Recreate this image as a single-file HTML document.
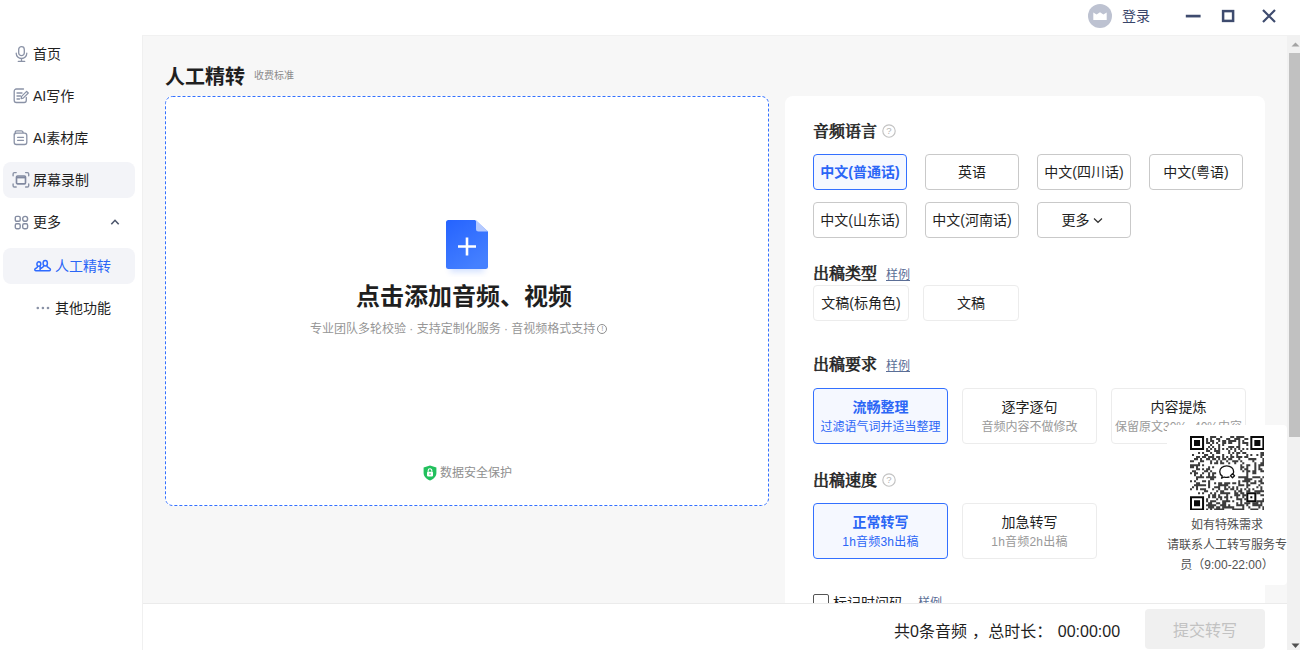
<!DOCTYPE html>
<html lang="zh-CN">
<head>
<meta charset="utf-8">
<title>人工精转</title>
<style>
*{box-sizing:border-box;margin:0;padding:0}
html,body{width:1300px;height:650px;overflow:hidden;background:#fff}
body{position:relative;font-family:"Liberation Sans","Noto Sans CJK SC",sans-serif;color:#1f1f1f;font-size:14px}
.abs{position:absolute}
.serif{font-family:"Liberation Serif","Noto Serif CJK SC",serif;font-weight:500;-webkit-text-stroke:0.550px #1f1f1f}
#topbar{left:0;top:0;width:1300px;height:35px;background:#fff;z-index:5}
#sidebar{left:0;top:34px;width:142px;height:616px;background:#fff}
#main{left:142px;top:34px;width:1145px;height:616px;background:#f7f7f7;overflow:hidden}
.nav{position:absolute;left:3px;width:132px;height:36px;border-radius:8px;line-height:37px;font-size:14px;color:#1f1f1f;white-space:nowrap}
.nav.hl{background:#f3f4f8}
.nav .t{position:absolute;left:30px;top:0}
.nav svg{position:absolute}
.btn{position:absolute;height:36px;border:1px solid #c9c9c9;border-radius:4px;background:#fff;text-align:center;line-height:34px;font-size:14px;color:#1f1f1f;white-space:nowrap}
.btn.sel{border-color:#3370ff;background:#f5f8ff;color:#2b66f6;font-weight:700}
.btn.lt{border-color:#ececec}
.card{position:absolute;width:135px;height:56px;border:1px solid #ececec;border-radius:4px;background:#fff;text-align:center;white-space:nowrap}
.card .a{position:absolute;left:0;right:0;top:9px;line-height:18px;font-size:14px;color:#1f1f1f}
.card .b{position:absolute;left:0;right:0;top:30px;line-height:16px;font-size:12px;color:#9a9a9a}
.card.sel{border-color:#3370ff;background:#f5f8ff}
.card.sel .a{color:#2b66f6;font-weight:700}
.card.sel .b{color:#2b66f6}
.h{position:absolute;font-size:16px;line-height:22px;color:#1f1f1f;white-space:nowrap}
.lnk{position:absolute;font-size:12px;line-height:16px;color:#5b6e96;text-decoration:underline;white-space:nowrap}
</style>
</head>
<body>
<div id="topbar" class="abs">
<div class="abs" style="left:1088px;top:4px;width:24px;height:24px;border-radius:12px;background:#bdc2d1"></div>
<svg class="abs" style="left:1088px;top:4px" width="24" height="24" viewBox="0 0 24 24"><path d="M5.3 8.4 L8.6 10.6 L12 8.2 L15.4 10.6 L18.7 8.4 L18.7 15.9 L5.3 15.9 Z" fill="#fff"/></svg>
<div class="abs" style="left:1122px;top:6px;font-size:14px;line-height:20px;color:#38446a;white-space:nowrap">登录</div>
<svg class="abs" style="left:1180px;top:4px" width="100" height="24" viewBox="0 0 100 24"><g stroke="#3e4b6e" fill="none"><path d="M5.800 12.100 H20.600" stroke-width="2.700"/><rect x="43.100" y="7.100" width="10" height="9.800" stroke-width="2.500"/></g></svg>
<svg class="abs" style="left:1261px;top:8px" width="16" height="16" viewBox="0 0 16 16"><path d="M2 2 L14 14 M14 2 L2 14" stroke="#3e4b6e" stroke-width="2.2" fill="none"/></svg>
</div>
<div id="sidebar" class="abs">
<div class="nav" style="top:2px"><svg style="left:10.600px;top:8.500px" width="16" height="18" viewBox="0 0 16 18"><rect x="4.7" y="1.7" width="5.6" height="9" rx="2.8" fill="none" stroke="#8a92a6" stroke-width="1.3"/><path d="M2.2 8.2 A5.3 5.3 0 0 0 12.8 8.2 M7.5 13.6 V16.3 M4.3 16.4 H10.7" fill="none" stroke="#8a92a6" stroke-width="1.3" stroke-linecap="round"/></svg><span class="t">首页</span></div>
<div class="nav" style="top:44px"><svg style="left:9px;top:9px" width="18" height="18" viewBox="0 0 18 18"><path d="M14.3 10.5 V13.3 A2.2 2.2 0 0 1 12.1 15.5 H4.4 A2.2 2.2 0 0 1 2.2 13.3 V4.2 A2.2 2.2 0 0 1 4.4 2 H11.5" fill="none" stroke="#8a92a6" stroke-width="1.3" stroke-linecap="round"/><path d="M5 6 H10 M5 9 H8.5 M5 12 H7.5" stroke="#8a92a6" stroke-width="1.3" stroke-linecap="round"/><path d="M14.6 4.3 L16.3 6 L11.2 11.1 L9.1 11.6 L9.6 9.4 Z" fill="none" stroke="#8a92a6" stroke-width="1.2" stroke-linejoin="round"/></svg><span class="t">AI写作</span></div>
<div class="nav" style="top:86px"><svg style="left:9px;top:9px" width="18" height="18" viewBox="0 0 18 18"><path d="M2.2 5 V13.2 A2.3 2.3 0 0 0 4.5 15.5 H12.5 A2.3 2.3 0 0 0 14.8 13.2 V6.4 A2.3 2.3 0 0 0 12.500 4.1 H4.5 A2.3 2.3 0 0 0 2.2 6.400 M3.2 4.500 V3.3 A1.4 1.4 0 0 1 4.6 1.9 H9.3 A1.8 1.8 0 0 1 11.1 3.700" fill="none" stroke="#8a92a6" stroke-width="1.3" stroke-linecap="round"/><path d="M5.600 8.300 H11.500 M5.600 11.300 H11.500" stroke="#8a92a6" stroke-width="1.3" stroke-linecap="round"/></svg><span class="t">AI素材库</span></div>
<div class="nav hl" style="top:128px"><svg style="left:9px;top:9px" width="18" height="18" viewBox="0 0 18 18"><path d="M1.100 4.700 V2.900 A1.300 1.300 0 0 1 2.400 1.600 H4.200 M13.600 1.600 H15.400 A1.300 1.300 0 0 1 16.700 2.900 V4.700 M16.700 12.900 V14.700 A1.300 1.300 0 0 1 15.400 16 H13.600 M4.200 16 H2.400 A1.300 1.300 0 0 1 1.100 14.700 V12.900" fill="none" stroke="#8a92a6" stroke-width="1.400" stroke-linecap="round"/><rect x="4.500" y="5" width="9" height="7.800" rx="1.100" fill="#f7f8fa" stroke="#8189a0" stroke-width="1.650"/><path d="M4.500 6.500 H13.500" stroke="#8189a0" stroke-width="1.800"/></svg><span class="t">屏幕录制</span></div>
<div class="nav" style="top:170px"><svg style="left:10.500px;top:11px" width="16" height="16" viewBox="0 0 16 16"><g fill="none" stroke="#858da2" stroke-width="1.400"><rect x="1.300" y="1.400" width="4.900" height="4.900" rx="1.400"/><rect x="8.700" y="1.400" width="4.900" height="4.900" rx="2.400"/><rect x="1.300" y="8.800" width="4.900" height="4.900" rx="1.400"/><rect x="8.700" y="8.800" width="4.900" height="4.900" rx="1.400"/></g></svg><span class="t">更多</span><svg style="left:107px;top:14px" width="10" height="8" viewBox="0 0 10 8"><path d="M1.300 6.200 L5 2.300 L8.700 6.200" fill="none" stroke="#4c566c" stroke-width="1.600"/></svg></div>
<div class="nav hl" style="top:214px;color:#2b66f6"><svg style="left:31px;top:11px" width="18" height="14" viewBox="0 0 18 14"><g fill="none" stroke="#2f6bff" stroke-width="1.500" stroke-linejoin="round" stroke-linecap="round"><ellipse cx="11.250" cy="4.200" rx="2.150" ry="2.700"/><ellipse cx="4.850" cy="5.050" rx="1.950" ry="2.250"/><path d="M9.700 6.500 C9.700 8.100 8.300 8.500 6.600 9.500 M12.800 6.500 C12.800 8.100 14.400 8.600 15.500 9.300 C16.300 9.800 16.500 10.500 16.300 11 C16.100 11.500 15.800 11.700 15.300 11.700 L1.800 11.700 C1.100 11.700 0.700 11.200 0.800 10.600 C0.900 10 1.300 9.600 2 9.300 C3 8.800 3.600 8.400 3.600 7.200 M6.100 7.200 L6.100 11.700"/></g></svg><span class="t" style="left:52px">人工精转</span></div>
<div class="nav" style="top:256px"><svg style="left:33px;top:16px" width="14" height="4" viewBox="0 0 14 4"><circle cx="1.800" cy="2" r="1.300" fill="#8a92a6"/><circle cx="6.900" cy="2" r="1.300" fill="#8a92a6"/><circle cx="12" cy="2" r="1.300" fill="#8a92a6"/></svg><span class="t" style="left:52px">其他功能</span></div>
</div>
<div id="main" class="abs">
<div class="abs" style="left:23px;top:29px;font-size:20px;line-height:28px;font-weight:700;color:#1f1f1f;white-space:nowrap">人工精转</div>
<div class="abs" style="left:112px;top:35px;font-size:10px;line-height:14px;color:#8a8a8a;white-space:nowrap">收费标准</div>
<div id="drop" class="abs" style="left:23px;top:62px;width:604px;height:410px;background:#fff;border-radius:7px">
<svg class="abs" style="left:0;top:0" width="604" height="410"><rect x="0.5" y="0.5" width="603" height="409" rx="7" ry="7" fill="none" stroke="#3370ff" stroke-width="1" stroke-dasharray="3 2"/></svg>
<svg class="abs" style="left:271px;top:114px" width="62" height="70" viewBox="0 0 62 70"><defs><linearGradient id="g1" x1="0" y1="0" x2="0.6" y2="1"><stop offset="0" stop-color="#2563ff"/><stop offset="1" stop-color="#4580ff"/></linearGradient><filter id="bl" x="-50%" y="-50%" width="200%" height="200%"><feGaussianBlur stdDeviation="3"/></filter></defs><rect x="14" y="52" width="34" height="10" fill="#3370ff" opacity="0.22" filter="url(#bl)"/><path d="M12.500 10 H39 L52 21.500 V56.500 A2.500 2.500 0 0 1 49.500 59 H12.500 A2.500 2.500 0 0 1 10 56.500 V12.500 A2.500 2.500 0 0 1 12.500 10 Z" fill="url(#g1)"/><path d="M40 10 L52 21.500 H42.500 A2.500 2.500 0 0 1 40 19 Z" fill="#b5caff"/><path d="M31 27.500 V45.500 M22 36.500 H40" stroke="#fff" stroke-width="2.600"/></svg>
<div class="abs" style="left:-3px;width:604px;top:183px;text-align:center;font-size:24px;line-height:36px;font-weight:700;color:#1f1f1f;white-space:nowrap">点击添加音频、视频</div>
<div class="abs" style="left:145px;top:225px;font-size:12px;line-height:16px;color:#969696;white-space:nowrap">专业团队多轮校验 · 支持定制化服务 · 音视频格式支持<span style="display:inline-block;width:10px;height:10px;border:1px solid #8f8f8f;border-radius:50%;font-size:8px;line-height:8px;text-align:center;vertical-align:middle;margin-left:2px;margin-top:-1px">!</span></div>
<svg class="abs" style="left:257.700px;top:369px" width="14" height="16" viewBox="0 0 14 16"><path d="M7 0.500 L13.400 2.600 V8 C13.400 11.600 10.500 14.200 7 15.500 C3.500 14.200 0.600 11.600 0.600 8 V2.600 Z" fill="#22c05d"/><rect x="4" y="6.800" width="6" height="4.600" rx="0.800" fill="#fff"/><path d="M5.200 6.800 V5.600 A1.800 1.800 0 0 1 8.800 5.600 V6.800" fill="none" stroke="#fff" stroke-width="1.100"/><rect x="6.500" y="8.300" width="1" height="1.600" fill="#22c05d"/></svg>
<div class="abs" style="left:275px;top:368px;font-size:12px;line-height:18px;color:#8f8f8f;white-space:nowrap">数据安全保护</div>
</div>
<div id="panel" class="abs" style="left:643px;top:62px;width:480px;height:560px;background:#fff;border-radius:8px 8px 0 0">
<div class="h serif" style="left:28px;top:25px">音频语言</div>
<svg class="abs" style="left:97px;top:28px" width="14" height="14" viewBox="0 0 14 14"><circle cx="7" cy="7" r="6.200" fill="none" stroke="#c2c2c2" stroke-width="1.150"/><text x="7" y="10.300" text-anchor="middle" font-size="9.500" fill="#b4b4b4" font-family="Liberation Sans, sans-serif">?</text></svg>
<div class="btn sel" style="left:28px;top:58px;width:94px">中文(普通话)</div>
<div class="btn " style="left:140px;top:58px;width:94px">英语</div>
<div class="btn " style="left:252px;top:58px;width:94px">中文(四川话)</div>
<div class="btn " style="left:364px;top:58px;width:94px">中文(粤语)</div>
<div class="btn " style="left:28px;top:106px;width:94px">中文(山东话)</div>
<div class="btn " style="left:140px;top:106px;width:94px">中文(河南话)</div>
<div class="btn" style="left:252px;top:106px;width:94px;padding-right:4px">更多<svg width="10" height="7" viewBox="0 0 10 7" style="margin-left:3px;vertical-align:1px"><path d="M1 1.500 L5 5.300 L9 1.500" fill="none" stroke="#333" stroke-width="1.200"/></svg></div>
<div class="h serif" style="left:28px;top:167px">出稿类型</div>
<div class="lnk" style="left:101px;top:171px">样例</div>
<div class="btn lt" style="left:28px;top:189px;width:96px">文稿(标角色)</div>
<div class="btn lt" style="left:138px;top:189px;width:96px">文稿</div>
<div class="h serif" style="left:28px;top:258px">出稿要求</div>
<div class="lnk" style="left:101px;top:262px">样例</div>
<div class="card sel" style="left:28px;top:292px"><div class="a">流畅整理</div><div class="b">过滤语气词并适当整理</div></div>
<div class="card " style="left:177px;top:292px"><div class="a">逐字逐句</div><div class="b">音频内容不做修改</div></div>
<div class="card " style="left:326px;top:292px"><div class="a">内容提炼</div><div class="b">保留原文30%~40%内容</div></div>
<div class="h serif" style="left:28px;top:374px">出稿速度</div>
<svg class="abs" style="left:97px;top:377px" width="14" height="14" viewBox="0 0 14 14"><circle cx="7" cy="7" r="6.200" fill="none" stroke="#c2c2c2" stroke-width="1.150"/><text x="7" y="10.300" text-anchor="middle" font-size="9.500" fill="#b4b4b4" font-family="Liberation Sans, sans-serif">?</text></svg>
<div class="card sel" style="left:28px;top:407px"><div class="a">正常转写</div><div class="b" style="letter-spacing:0.200px">1h音频3h出稿</div></div>
<div class="card " style="left:177px;top:407px"><div class="a">加急转写</div><div class="b" style="letter-spacing:0.200px">1h音频2h出稿</div></div>
<div class="abs" style="left:28px;top:498px;width:16px;height:16px;border:1px solid #555;border-radius:2px;background:#fff"></div>
<div class="abs" style="left:48px;top:497px;font-size:14px;line-height:20px;color:#1f1f1f;white-space:nowrap">标记时间码</div>
<div class="lnk" style="left:133px;top:499px">样例</div>
</div>
<div id="qr" class="abs" style="left:1025px;top:391px;width:120px;height:160px;background:#fff;border-radius:4px">
<svg class="abs" style="left:23px;top:10.500px" width="74.400" height="74.400" viewBox="0 0 74 74"><defs><filter id="qb" x="-5%" y="-5%" width="110%" height="110%"><feGaussianBlur stdDeviation="0.450"/></filter></defs><path d="M20 0h6v2h-6zM30 0h2v2h-2zM40 0h4v2h-4zM46 0h8v2h-8zM16 2h2v2h-2zM20 2h2v2h-2zM26 2h4v2h-4zM36 2h4v2h-4zM44 2h6v2h-6zM54 2h4v2h-4zM16 4h2v2h-2zM20 4h4v2h-4zM28 4h2v2h-2zM32 4h4v2h-4zM38 4h8v2h-8zM48 4h2v2h-2zM52 4h2v2h-2zM16 6h4v2h-4zM22 6h2v2h-2zM26 6h2v2h-2zM32 6h4v2h-4zM38 6h4v2h-4zM48 6h2v2h-2zM52 6h6v2h-6zM20 8h2v2h-2zM28 8h2v2h-2zM32 8h2v2h-2zM48 8h2v2h-2zM56 8h2v2h-2zM18 10h2v2h-2zM22 10h2v2h-2zM28 10h2v2h-2zM38 10h6v2h-6zM46 10h4v2h-4zM16 12h2v2h-2zM20 12h2v2h-2zM24 12h2v2h-2zM28 12h2v2h-2zM32 12h2v2h-2zM36 12h2v2h-2zM40 12h2v2h-2zM44 12h2v2h-2zM48 12h2v2h-2zM52 12h2v2h-2zM56 12h2v2h-2zM16 14h4v2h-4zM24 14h6v2h-6zM38 14h2v2h-2zM44 14h2v2h-2zM50 14h2v2h-2zM8 16h2v2h-2zM12 16h2v2h-2zM20 16h2v2h-2zM26 16h4v2h-4zM38 16h2v2h-2zM42 16h2v2h-2zM46 16h4v2h-4zM52 16h4v2h-4zM70 16h4v2h-4zM2 18h2v2h-2zM14 18h4v2h-4zM22 18h2v2h-2zM32 18h2v2h-2zM40 18h2v2h-2zM46 18h2v2h-2zM56 18h2v2h-2zM60 18h2v2h-2zM66 18h2v2h-2zM70 18h4v2h-4zM6 20h4v2h-4zM12 20h4v2h-4zM18 20h6v2h-6zM26 20h4v2h-4zM32 20h2v2h-2zM36 20h2v2h-2zM40 20h4v2h-4zM46 20h6v2h-6zM54 20h4v2h-4zM70 20h2v2h-2zM4 22h4v2h-4zM10 22h2v2h-2zM16 22h4v2h-4zM22 22h4v2h-4zM28 22h2v2h-2zM32 22h4v2h-4zM38 22h4v2h-4zM48 22h2v2h-2zM58 22h8v2h-8zM72 22h2v2h-2zM0 24h4v2h-4zM10 24h4v2h-4zM20 24h2v2h-2zM26 24h2v2h-2zM30 24h2v2h-2zM36 24h2v2h-2zM42 24h6v2h-6zM50 24h2v2h-2zM62 24h2v2h-2zM72 24h2v2h-2zM8 26h2v2h-2zM20 26h2v2h-2zM24 26h4v2h-4zM30 26h4v2h-4zM38 26h2v2h-2zM44 26h2v2h-2zM52 26h2v2h-2zM64 26h2v2h-2zM70 26h4v2h-4zM0 28h10v2h-10zM12 28h2v2h-2zM50 28h2v2h-2zM56 28h4v2h-4zM64 28h2v2h-2zM68 28h6v2h-6zM0 30h4v2h-4zM6 30h2v2h-2zM18 30h2v2h-2zM22 30h2v2h-2zM50 30h4v2h-4zM56 30h2v2h-2zM64 30h2v2h-2zM68 30h2v2h-2zM6 32h4v2h-4zM12 32h2v2h-2zM16 32h4v2h-4zM50 32h2v2h-2zM54 32h4v2h-4zM64 32h2v2h-2zM68 32h4v2h-4zM2 34h4v2h-4zM14 34h4v2h-4zM20 34h2v2h-2zM52 34h2v2h-2zM56 34h4v2h-4zM62 34h4v2h-4zM70 34h4v2h-4zM0 36h2v2h-2zM4 36h4v2h-4zM12 36h2v2h-2zM18 36h2v2h-2zM22 36h4v2h-4zM56 36h2v2h-2zM62 36h4v2h-4zM4 38h2v2h-2zM10 38h2v2h-2zM18 38h2v2h-2zM22 38h2v2h-2zM56 38h2v2h-2zM6 40h8v2h-8zM16 40h10v2h-10zM48 40h10v2h-10zM62 40h8v2h-8zM72 40h2v2h-2zM6 42h2v2h-2zM20 42h4v2h-4zM54 42h8v2h-8zM70 42h2v2h-2zM0 44h2v2h-2zM4 44h2v2h-2zM12 44h4v2h-4zM18 44h2v2h-2zM48 44h2v2h-2zM52 44h8v2h-8zM64 44h2v2h-2zM68 44h4v2h-4zM6 46h4v2h-4zM18 46h2v2h-2zM24 46h2v2h-2zM28 46h4v2h-4zM34 46h6v2h-6zM42 46h4v2h-4zM48 46h2v2h-2zM56 46h2v2h-2zM60 46h6v2h-6zM70 46h4v2h-4zM4 48h12v2h-12zM18 48h2v2h-2zM28 48h10v2h-10zM48 48h6v2h-6zM56 48h4v2h-4zM68 48h2v2h-2zM2 50h2v2h-2zM6 50h2v2h-2zM18 50h2v2h-2zM24 50h6v2h-6zM34 50h2v2h-2zM38 50h2v2h-2zM42 50h2v2h-2zM46 50h2v2h-2zM56 50h2v2h-2zM66 50h2v2h-2zM70 50h2v2h-2zM0 52h2v2h-2zM6 52h2v2h-2zM10 52h6v2h-6zM22 52h2v2h-2zM28 52h2v2h-2zM34 52h4v2h-4zM40 52h4v2h-4zM46 52h2v2h-2zM50 52h2v2h-2zM54 52h2v2h-2zM58 52h2v2h-2zM62 52h2v2h-2zM70 52h2v2h-2zM14 54h4v2h-4zM26 54h2v2h-2zM30 54h4v2h-4zM44 54h2v2h-2zM48 54h4v2h-4zM56 54h4v2h-4zM64 54h10v2h-10zM8 56h2v2h-2zM12 56h2v2h-2zM20 56h2v2h-2zM24 56h2v2h-2zM30 56h10v2h-10zM44 56h4v2h-4zM50 56h4v2h-4zM66 56h4v2h-4zM18 58h2v2h-2zM22 58h4v2h-4zM28 58h2v2h-2zM36 58h2v2h-2zM44 58h6v2h-6zM52 58h4v2h-4zM70 58h4v2h-4zM18 60h2v2h-2zM22 60h4v2h-4zM28 60h4v2h-4zM34 60h4v2h-4zM40 60h2v2h-2zM46 60h2v2h-2zM52 60h2v2h-2zM16 62h2v2h-2zM26 62h2v2h-2zM30 62h2v2h-2zM36 62h2v2h-2zM46 62h6v2h-6zM54 62h2v2h-2zM72 62h2v2h-2zM16 64h2v2h-2zM20 64h6v2h-6zM32 64h8v2h-8zM42 64h2v2h-2zM50 64h2v2h-2zM66 64h8v2h-8zM18 66h4v2h-4zM26 66h4v2h-4zM32 66h4v2h-4zM46 66h2v2h-2zM50 66h2v2h-2zM54 66h6v2h-6zM62 66h6v2h-6zM70 66h2v2h-2zM16 68h10v2h-10zM30 68h6v2h-6zM38 68h2v2h-2zM46 68h8v2h-8zM56 68h2v2h-2zM62 68h10v2h-10zM18 70h6v2h-6zM26 70h4v2h-4zM32 70h12v2h-12zM52 70h2v2h-2zM58 70h2v2h-2zM68 70h2v2h-2zM72 70h2v2h-2zM16 72h2v2h-2zM20 72h2v2h-2zM24 72h10v2h-10zM42 72h12v2h-12zM60 72h8v2h-8zM72 72h2v2h-2z" fill="#1a1a1a" opacity="0.850" filter="url(#qb)"/><path d="M0 0h14v2h-14zM60 0h14v2h-14zM0 2h2v2h-2zM12 2h2v2h-2zM60 2h2v2h-2zM72 2h2v2h-2zM0 4h2v2h-2zM4 4h6v2h-6zM12 4h2v2h-2zM60 4h2v2h-2zM64 4h6v2h-6zM72 4h2v2h-2zM0 6h2v2h-2zM4 6h6v2h-6zM12 6h2v2h-2zM60 6h2v2h-2zM64 6h6v2h-6zM72 6h2v2h-2zM0 8h2v2h-2zM4 8h6v2h-6zM12 8h2v2h-2zM60 8h2v2h-2zM64 8h6v2h-6zM72 8h2v2h-2zM0 10h2v2h-2zM12 10h2v2h-2zM60 10h2v2h-2zM72 10h2v2h-2zM0 12h14v2h-14zM60 12h14v2h-14zM56 56h10v2h-10zM56 58h2v2h-2zM64 58h2v2h-2zM0 60h14v2h-14zM56 60h2v2h-2zM60 60h2v2h-2zM64 60h2v2h-2zM0 62h2v2h-2zM12 62h2v2h-2zM56 62h2v2h-2zM64 62h2v2h-2zM0 64h2v2h-2zM4 64h6v2h-6zM12 64h2v2h-2zM56 64h10v2h-10zM0 66h2v2h-2zM4 66h6v2h-6zM12 66h2v2h-2zM0 68h2v2h-2zM4 68h6v2h-6zM12 68h2v2h-2zM0 70h2v2h-2zM12 70h2v2h-2zM0 72h14v2h-14z" fill="#0a0a0a"/><g fill="none" stroke="#111" stroke-width="1.300" stroke-linejoin="round"><path d="M36.500 29.800 C32.600 29.800 29.600 32.300 29.600 35.500 C29.600 37.300 30.600 38.900 32.100 39.900 L31.400 42 L33.900 40.800 C34.700 41 35.600 41.200 36.500 41.200 C37.500 41.200 38.400 41 39.300 40.700 M42.700 37.700 C43.200 37 43.400 36.300 43.400 35.500 C43.400 32.300 40.400 29.800 36.500 29.800"/><path d="M42.300 37.600 L44.300 39.600 L42.300 41.600 L40.300 39.600 Z"/></g></svg>
<div class="abs" style="left:0;width:120px;top:90px;text-align:center;font-size:12px;line-height:20px;color:#505050;white-space:nowrap">如有特殊需求<br>请联系人工转写服务专<br>员（9:00-22:00）</div>
</div>
<div id="footer" class="abs" style="left:0;top:569px;width:1145px;height:47px;background:#fff;border-top:1px solid #ebebeb">
<div class="abs" style="left:751px;top:17px;font-size:16px;line-height:22px;color:#1f1f1f;white-space:pre;word-spacing:1px;margin-left:1px">共0条音频<span style="position:relative;left:5px">，</span> 总时长： 00:00:00</div>
<div class="abs" style="left:1003px;top:5px;width:120px;height:40px;border-radius:4px;background:#f0f0f0;color:#c2c2c2;font-size:16px;line-height:43px;text-align:center">提交转写</div>
</div>
</div>
<div class="abs" style="left:142px;top:35px;width:1px;height:615px;background:#f0f0f0"></div>
<div class="abs" style="left:142px;top:35px;width:1145px;height:1px;background:#f1f1f1"></div>
<div id="sb" class="abs" style="left:1287px;top:34px;width:13px;height:616px;background:#f1f1f1"><div class="abs" style="left:2px;top:19px;width:11px;height:384px;background:#c1c1c1"></div><svg class="abs" style="left:3px;top:7px" width="11" height="6" viewBox="0 0 11 6"><path d="M1.500 5.500 L5.500 1.500 L9.500 5.500 Z" fill="#a3a3a3"/></svg><svg class="abs" style="left:3px;top:609px" width="11" height="6" viewBox="0 0 11 6"><path d="M1.500 0.500 L5.500 5 L9.500 0.500 Z" fill="#505050"/></svg></div>
</body>
</html>
